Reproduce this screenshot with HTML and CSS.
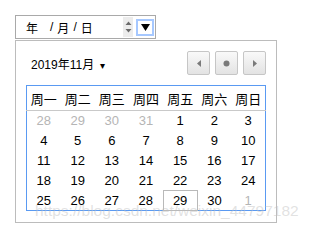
FILE: index.html
```html
<!DOCTYPE html>
<html>
<head>
	<title>Date picker</title>
	<link rel="stylesheet" href="styles.css">
</head>
<body>

<div class="picker">
	<div class="date-input">
		<span class="field">年</span>
		<span class="sep sep-first">/</span>
		<span class="field">月</span>
		<span class="sep">/</span>
		<span class="field">日</span>
		<span class="spin">
			<svg width="7" height="14" viewBox="0 0 7 14"><path d="M0.5 5 L3.5 1.5 L6.5 5 Z M0.5 9 L3.5 12.5 L6.5 9 Z" fill="#6b6b6b"/></svg>
		</span>
		<span class="drop">
			<svg width="9" height="7" viewBox="0 0 9 7"><path d="M0 0 L9 0 L4.5 7 Z" fill="#000"/></svg>
		</span>
	</div>

	<div class="popup">
		<div class="popup-head">
			<div class="month">2019年11月 <span class="caret">&#9662;</span></div>
			<div class="nav">
				<button class="nav-btn"><svg width="4" height="7" viewBox="0 0 4 7"><path d="M4 0 L0 3.5 L4 7 Z" fill="#7a7a7a"/></svg></button>
				<button class="nav-btn"><svg width="7" height="7" viewBox="0 0 7 7"><circle cx="3.5" cy="3.5" r="3" fill="#7a7a7a"/></svg></button>
				<button class="nav-btn"><svg width="4" height="7" viewBox="0 0 4 7"><path d="M0 0 L4 3.5 L0 7 Z" fill="#7a7a7a"/></svg></button>
			</div>
		</div>

		<table class="cal">
			<thead>
				<tr><th>周一</th><th>周二</th><th>周三</th><th>周四</th><th>周五</th><th>周六</th><th>周日</th></tr>
			</thead>
			<tbody>
				<tr><td class="other">28</td><td class="other">29</td><td class="other">30</td><td class="other">31</td><td>1</td><td>2</td><td>3</td></tr>
				<tr><td>4</td><td>5</td><td>6</td><td>7</td><td>8</td><td>9</td><td>10</td></tr>
				<tr><td>11</td><td>12</td><td>13</td><td>14</td><td>15</td><td>16</td><td>17</td></tr>
				<tr><td>18</td><td>19</td><td>20</td><td>21</td><td>22</td><td>23</td><td>24</td></tr>
				<tr><td>25</td><td>26</td><td>27</td><td>28</td><td class="today">29</td><td>30</td><td class="other">1</td></tr>
			</tbody>
		</table>
	</div>

	<div class="watermark">https://blog.csdn.net/weixin_44797182</div>
</div>

</body>
</html>
```

FILE: styles.css
```css
body {
	margin: 0;
	background: #fff;
	font-family: "Liberation Sans", "Noto Sans CJK SC", sans-serif;
	font-size: 13px;
	color: #000;
}
.picker {
	position: relative;
	padding: 15px;
	width: 262px;
}
.date-input {
	box-sizing: border-box;
	width: 141px;
	height: 24px;
	border: 1px solid #a9a9a9;
	display: flex;
	align-items: center;
	padding-left: 10px;
	padding-right: 1px;
}
.date-input .field {
	font-size: 12px;
}
.date-input .sep {
	margin: 0 4px;
	font-size: 12px;
}
.date-input .sep-first {
	margin-left: 12px;
}
.spin {
	margin-left: auto;
	width: 10px;
	height: 20px;
	background: #ececec;
	display: flex;
	align-items: center;
	justify-content: center;
}
.drop {
	box-sizing: border-box;
	margin-left: 3px;
	width: 18px;
	height: 17px;
	border: 2px solid #a6c8ff;
	display: flex;
	align-items: center;
	justify-content: center;
}
.popup {
	box-sizing: border-box;
	margin-top: 1px;
	width: 262px;
	height: 183px;
	border: 1px solid #bcbcbc;
	padding: 10px 10px 0 10px;
}
.popup-head {
	display: flex;
	justify-content: space-between;
	align-items: center;
	height: 24px;
	margin-bottom: 10px;
}
.month {
	padding-left: 5px;
	font-size: 12px;
}
.caret {
	font-size: 10px;
	margin-left: 2px;
}
.nav {
	display: flex;
	gap: 5px;
}
.nav-btn {
	box-sizing: border-box;
	width: 23px;
	height: 24px;
	padding: 0;
	border: 1px solid #c6c6c6;
	border-radius: 2px;
	background: linear-gradient(#f9f9f9, #e3e3e3);
	display: flex;
	align-items: center;
	justify-content: center;
}
.cal {
	width: 240px;
	border: 1px solid #5a9af2;
	border-collapse: collapse;
	table-layout: fixed;
}
.cal th {
	height: 24px;
	padding: 0;
	font-weight: normal;
	font-size: 13px;
	border-bottom: 1px solid #c9c9c9;
}
.cal td {
	box-sizing: border-box;
	height: 20px;
	padding: 0;
	text-align: center;
	font-size: 13px;
}
.cal td.other {
	color: #b5b5b5;
}
.cal td.today {
	border: 1px solid #b9b9b9;
}
.watermark {
	position: absolute;
	left: 35px;
	top: 202px;
	font-size: 15.5px;
	color: rgba(190, 190, 190, 0.45);
	white-space: nowrap;
}
```
